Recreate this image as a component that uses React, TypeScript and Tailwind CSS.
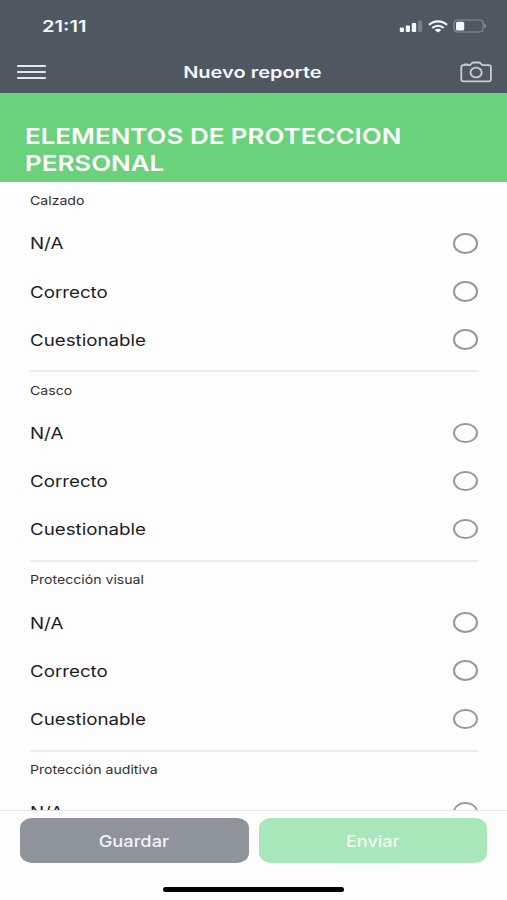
import { useState } from 'react';

const sections = ['Calzado', 'Casco', 'Protección visual', 'Protección auditiva'];
const options = ['N/A', 'Correcto', 'Cuestionable'];

function StatusBar() {
  return (
    <div className="flex h-[52px] items-center justify-between pl-[42px] pr-[20px]">
      <span className="origin-left scale-x-[1.26] text-[16px] font-semibold leading-5">21:11</span>
      <div className="flex items-center">
        <svg width="24" height="12" viewBox="0 0 24 12" fill="currentColor">
          <rect x="0.8" y="7.5" width="4.2" height="4.5" rx="1" />
          <rect x="6.8" y="5.5" width="4.2" height="6.5" rx="1" />
          <rect x="12.8" y="3" width="4.4" height="9" rx="1" />
          <rect x="19" y="0.5" width="4.2" height="11.5" rx="1" opacity="0.25" />
        </svg>
        <svg className="ml-[5px]" width="20" height="13" viewBox="0 0 20 13" fill="none" stroke="currentColor" strokeWidth="2.2">
          <path d="M1 4.9C6 .1 14 .1 19 4.9" />
          <path d="M4.3 8C7.5 5 12.5 5 15.7 8" />
          <path d="M10 12.6 6.7 9.9c1.9-1.5 4.7-1.5 6.6 0Z" fill="currentColor" stroke="none" />
        </svg>
        <svg className="ml-[5px]" width="34" height="14" viewBox="0 0 34 14" fill="none">
          <rect x="1.1" y="1" width="29" height="12" rx="3.5" stroke="currentColor" strokeOpacity="0.35" strokeWidth="1.2" />
          <rect x="3" y="2.7" width="8.2" height="8.8" rx="1.5" fill="currentColor" />
          <path d="M31.4 4.8c2.2.7 2.2 3.7 0 4.4Z" fill="currentColor" fillOpacity="0.4" />
        </svg>
      </div>
    </div>
  );
}

function NavBar() {
  return (
    <div className="flex h-[39px] items-center justify-between pl-[16.5px] pr-[15px]">
      <button aria-label="Menú" className="flex w-[29px] flex-col gap-[4px]">
        <span className="h-[2px] rounded-full bg-[#e2e8f0]" />
        <span className="h-[2px] rounded-full bg-[#e2e8f0]" />
        <span className="h-[2px] rounded-full bg-[#e2e8f0]" />
      </button>
      <h1 className="scale-x-[1.25] text-[16px] font-semibold leading-5">Nuevo reporte</h1>
      <button aria-label="Cámara">
        <svg width="32" height="22" viewBox="0 0 32 22" fill="none" stroke="#c5ced8" strokeWidth="1.8" strokeLinejoin="round">
          <path d="M3.6 4.2h.9v-.7h3v.7h1.7c1.100 0 1.500-.4 2-1.200.7-1.100 1.200-1.500 2.300-1.500h5.400c1.100 0 1.600.4 2.300 1.500.5.8.9 1.200 2 1.200h5.400c1.500 0 2.300.7 2.300 1.800v12.500c0 1.200-.8 1.800-2.300 1.800h-25c-1.500 0-2.300-.6-2.300-1.800V6c0-1.100.8-1.800 2.300-1.800Z" />
          <ellipse cx="16.100" cy="11.500" rx="5.600" ry="4.900" />
        </svg>
      </button>
    </div>
  );
}

function Section({ title }: { title: string }) {
  const [selected, setSelected] = useState<string | null>(null);

  return (
    <section className="ml-[30px] mr-[29px] h-[189.6px] shrink-0 border-b-2 border-[#ececee]">
      <h3 className="flex h-[36.6px] items-center text-[12px] text-[#303032]">
        <span className="origin-left scale-x-[1.175]">{title}</span>
      </h3>
      {options.map((option) => (
        <button
          key={option}
          onClick={() => setSelected(option)}
          className="flex h-[48.1px] w-full items-center justify-between text-[16px] text-[#1c1c1e]"
        >
          <span className="origin-left scale-x-[1.17]">{option}</span>
          <span
            className={`h-[20.5px] w-[25px] rounded-[50%] border-2 ${
              selected === option ? 'border-[#68d17b] bg-[#68d17b]' : 'border-[#98989a]'
            }`}
          />
        </button>
      ))}
    </section>
  );
}

export default function App() {
  return (
    <div className="flex h-[900px] w-[507px] flex-col overflow-hidden bg-[#fdfdfd] font-['Inter','Liberation_Sans',sans-serif]">
      <header className="h-[93px] shrink-0 bg-[#4e5762] text-[#f3f7fb]">
        <StatusBar />
        <NavBar />
      </header>

      <div className="h-[89px] shrink-0 bg-[#69d27b] pl-[25px] pt-[29.5px]">
        <h2 className="w-[340px] origin-left scale-x-[1.178] text-[22px] font-semibold leading-[27px] text-white">
          ELEMENTOS DE PROTECCION PERSONAL
        </h2>
      </div>

      <main className="flex min-h-0 flex-1 flex-col overflow-y-auto pt-[0.8px] [scrollbar-width:none]">
        {sections.map((title) => (
          <Section key={title} title={title} />
        ))}
      </main>

      {/* Acciones */}
      <footer className="h-[90px] shrink-0 border-t border-[#e6e6e8] px-[20px] pt-[7px]">
        <div className="flex gap-[10px] text-[16px] font-medium">
          <button className="h-[45px] flex-1 rounded-[12px/10px] bg-[#8e949b] text-[#f1f4f7]">
            <span className="inline-block scale-x-[1.14]">Guardar</span>
          </button>
          <button className="h-[45px] flex-1 rounded-[12px/10px] bg-[#a8e7b9] text-[#effcf1]">
            <span className="inline-block scale-x-[1.13]">Enviar</span>
          </button>
        </div>
        <div className="mx-auto mt-[24px] h-[5px] w-[181px] rounded-full bg-black" />
      </footer>
    </div>
  );
}
